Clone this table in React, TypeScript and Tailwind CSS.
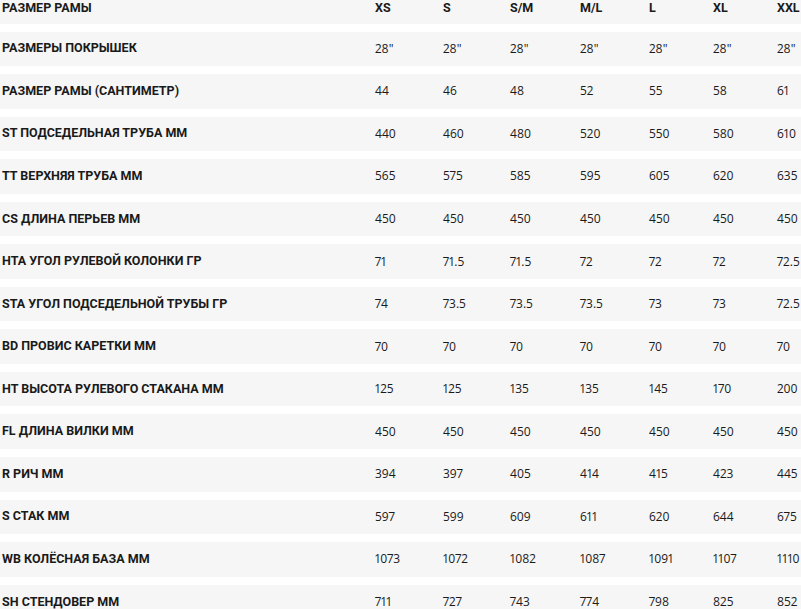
import React from "react";

const sizes = ["XS", "S", "S/M", "M/L", "L", "XL", "XXL"];

const rows: [string, string[]][] = [
  ["РАЗМЕРЫ ПОКРЫШЕК", ["28\"", "28\"", "28\"", "28\"", "28\"", "28\"", "28\""]],
  ["РАЗМЕР РАМЫ (САНТИМЕТР)", ["44", "46", "48", "52", "55", "58", "61"]],
  ["ST ПОДСЕДЕЛЬНАЯ ТРУБА ММ", ["440", "460", "480", "520", "550", "580", "610"]],
  ["TT ВЕРХНЯЯ ТРУБА ММ", ["565", "575", "585", "595", "605", "620", "635"]],
  ["CS ДЛИНА ПЕРЬЕВ ММ", ["450", "450", "450", "450", "450", "450", "450"]],
  ["HTA УГОЛ РУЛЕВОЙ КОЛОНКИ ГР", ["71", "71.5", "71.5", "72", "72", "72", "72.5"]],
  ["STA УГОЛ ПОДСЕДЕЛЬНОЙ ТРУБЫ ГР", ["74", "73.5", "73.5", "73.5", "73", "73", "72.5"]],
  ["BD ПРОВИС КАРЕТКИ ММ", ["70", "70", "70", "70", "70", "70", "70"]],
  ["HT ВЫСОТА РУЛЕВОГО СТАКАНА ММ", ["125", "125", "135", "135", "145", "170", "200"]],
  ["FL ДЛИНА ВИЛКИ ММ", ["450", "450", "450", "450", "450", "450", "450"]],
  ["R РИЧ ММ", ["394", "397", "405", "414", "415", "423", "445"]],
  ["S СТАК ММ", ["597", "599", "609", "611", "620", "644", "675"]],
  ["WB КОЛЁСНАЯ БАЗА ММ", ["1073", "1072", "1082", "1087", "1091", "1107", "1110"]],
  ["SH СТЕНДОВЕР ММ", ["711", "727", "743", "774", "798", "825", "852"]],
];

const grid =
  "grid grid-cols-[373px_68px_67px_70px_69px_64px_64px_1fr] pl-[2px] bg-[#f6f6f6] text-[#1a1a1a]";

const App = () => {
  return (
    <div className="w-[801px] h-[609px] overflow-hidden bg-white flex flex-col gap-[8px] font-['Open_Sans',sans-serif] text-[12px] proportional-nums">
      {/* header row, top part cut off */}
      <div className={grid + " h-[23.5px] shrink-0 items-start"}>
        <div className="font-bold font-['Roboto',sans-serif] text-[12.5px] leading-[15px]">РАЗМЕР РАМЫ</div>
        {sizes.map((s) => (
          <div key={s} className="font-bold font-['Roboto',sans-serif] text-[12.5px] leading-[15px]">
            {s}
          </div>
        ))}
      </div>
      {rows.map(([label, vals]) => (
        <div key={label} className={grid + " h-[34.55px] shrink-0 items-center"}>
          <div className="font-bold font-['Roboto',sans-serif] text-[12.5px]">{label}</div>
          {vals.map((v, i) => (
            <div key={i} className="whitespace-nowrap">{v}</div>
          ))}
        </div>
      ))}
    </div>
  );
};

export default App;
